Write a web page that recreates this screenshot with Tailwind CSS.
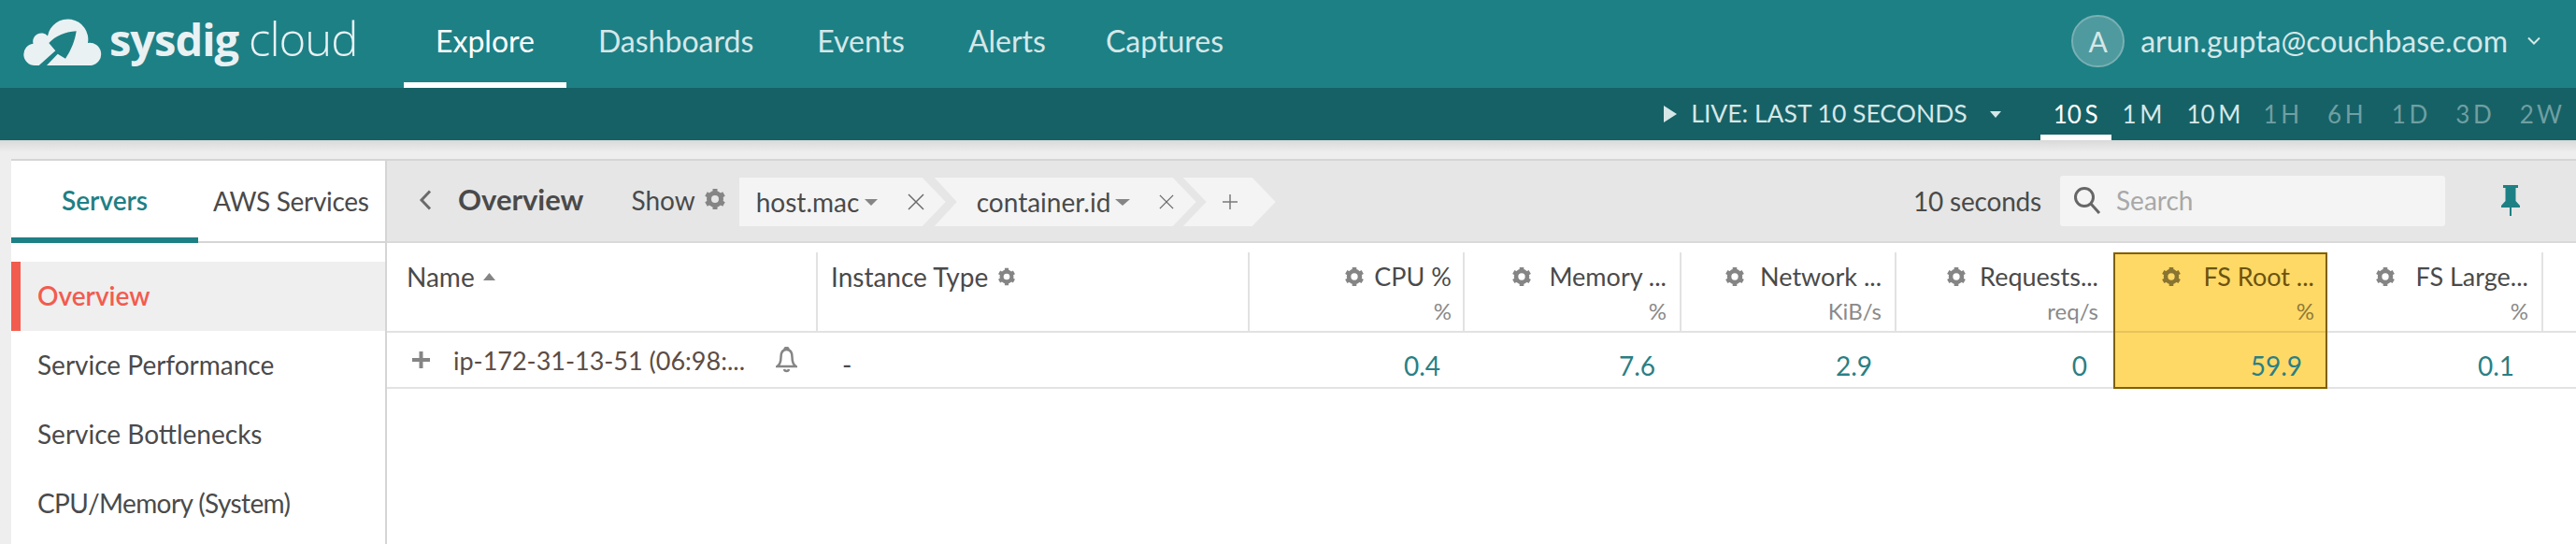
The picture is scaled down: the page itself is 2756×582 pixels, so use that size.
<!DOCTYPE html>
<html>
  <head>
    <meta charset="UTF-8" />
    <script src="https://cdn.jsdelivr.net/npm/@tailwindcss/browser@4"></script>
    <title>sysdig cloud</title>
  </head>
  <body class="h-[582px] overflow-hidden bg-[#eeeeee] font-['Lato',sans-serif] text-[#4a4a4a]">
    <svg class="hidden">
      <symbol id="gear" viewBox="0 0 24 24">
        <circle cx="12" cy="12" r="6.5" fill="none" stroke="currentColor" stroke-width="5" />
        <path d="M12 1v6M12 17v6M2.500 6.500l5.200 3M16.300 14.500l5.200 3M2.500 17.500l5.200-3M16.300 9.500l5.200-3" stroke="currentColor" stroke-width="5" />
      </symbol>
    </svg>

    <!-- top nav -->
    <header class="flex h-[94px] items-stretch bg-[#1d8085]">
      <div class="flex w-[432px] items-start pl-[25px] pt-[18px]">
        <svg class="h-[52px] w-[85px]" viewBox="5 8 85 52" fill="#e9f1f3">
          <path d="M17 60a11.700 11.700 0 0 1-1.500-23.300a9 9 0 0 1 15.500-8.200a21.700 21.700 0 0 1 43 7.500a12 12 0 0 1 4 24z" />
          <path fill="#1d8085" d="M61.700 23.300C49 24 39 29 32.300 36L39.300 44.300L21.700 60H30L41.700 47.700L50 52.700C56 44 60 34 61.700 23.300z" />
        </svg>
        <div class="ml-[7px] mt-[-9px] flex items-baseline font-['Open_Sans',sans-serif] text-[#e9f1f3]">
          <span class="text-[47px] leading-[64px] font-bold tracking-[-1px]">sysdig</span>
          <span class="ml-[11px] text-[49px] leading-[64px] font-light tracking-[-1px]">cloud</span>
        </div>
      </div>
      <nav class="flex text-[32px] text-[#d6e7e8]">
        <a class="flex items-center border-b-[6px] border-white px-[34px] text-white">Explore</a>
        <a class="flex items-center border-b-[6px] border-transparent px-[34px]">Dashboards</a>
        <a class="flex items-center border-b-[6px] border-transparent px-[34px]">Events</a>
        <a class="flex items-center border-b-[6px] border-transparent px-[34px]">Alerts</a>
        <a class="flex items-center border-b-[6px] border-transparent pl-[30px] pr-[34px]">Captures</a>
      </nav>
      <div class="ml-auto flex items-center pb-[6px] pr-[37px] text-[32px] text-[#d6e7e8]">
        <span class="flex h-[56px] w-[57px] items-center justify-center rounded-full border-2 border-[#79b0b3] bg-[#4f9a9e] text-[30px]">A</span>
        <span class="ml-[17px]">arun.gupta@couchbase.com</span>
        <svg class="ml-[20px] h-[10px] w-[16px]" viewBox="0 0 16 10" fill="none" stroke="#d6e7e8" stroke-width="2"><path d="M2 1.500l6 6 6-6" /></svg>
      </div>
    </header>

    <!-- time range bar -->
    <div class="flex h-[56px] items-stretch justify-end bg-[#166166] pr-[15px] text-[26px] text-[#d6e7e8] [word-spacing:-3px]">
      <div class="mr-[42px] flex items-center">
        <svg class="h-[18px] w-[14px]" viewBox="0 0 14 18" fill="#d6e7e8"><path d="M0 0l14 9L0 18z" /></svg>
        <span class="ml-[15px] text-[26.500px] [word-spacing:0]">LIVE: LAST 10 SECONDS</span>
        <svg class="ml-[24px] h-[7px] w-[12px]" viewBox="0 0 12 7" fill="#d6e7e8"><path d="M0 0h12L6 7z" /></svg>
      </div>
      <div class="flex items-center border-b-[6px] border-white px-[14px] pt-[6px] text-white">10 S</div>
      <div class="ml-[12px] flex items-center">1 M</div>
      <div class="ml-[26px] flex items-center">10 M</div>
      <div class="ml-[24px] flex items-center text-[#6f9fa2]">1 H</div>
      <div class="ml-[30px] flex items-center text-[#6f9fa2]">6 H</div>
      <div class="ml-[30px] flex items-center text-[#6f9fa2]">1 D</div>
      <div class="ml-[30px] flex items-center text-[#6f9fa2]">3 D</div>
      <div class="ml-[30px] flex items-center text-[#6f9fa2]">2 W</div>
    </div>

    <!-- main panel -->
    <main class="h-[432px] bg-gradient-to-b from-[#d9d9d9] from-0% to-[#eeeeee] to-[3%] pl-[12px] pt-[20px]">
      <div class="flex h-[412px] border-t-2 border-[#d5d5d5] bg-white">
        <aside class="w-[402px] shrink-0 border-r-2 border-[#d5d5d5]">
          <div class="flex h-[88px] border-b-2 border-[#d5d5d5] text-[28px]">
            <div class="flex w-[200px] -mb-[2px] items-center justify-center border-b-[6px] border-[#1d8085] pt-[2px] font-semibold text-[#1d8085]">Servers</div>
            <div class="flex flex-1 items-center pl-[16px] tracking-[-0.3px]">AWS Services</div>
          </div>
          <ul class="pt-[20px] text-[28px]">
            <li class="flex h-[74px] items-center border-l-[10px] border-[#f25c4f] bg-[#efefef] pb-[3px] pl-[18px] font-semibold text-[#f25c4f]">Overview</li>
            <li class="flex h-[74px] items-center pb-[3px] pl-[28px]">Service Performance</li>
            <li class="flex h-[74px] items-center pb-[3px] pl-[28px]">Service Bottlenecks</li>
            <li class="flex h-[74px] items-center pb-[3px] pl-[28px] tracking-[-0.6px]">CPU/Memory (System)</li>
          </ul>
        </aside>

        <section class="min-w-0 flex-1">
          <!-- toolbar -->
          <div class="flex h-[88px] items-start border-b-2 border-[#d9d9d9] bg-[#e6e6e6] pt-[18px]">
            <svg class="ml-[34px] mt-[13px] h-[22px] w-[14px]" viewBox="0 0 14 22" fill="none" stroke="#6b6b6b" stroke-width="3"><path d="M12 1.500L3 11l9 9.500" /></svg>
            <span class="ml-[28px] text-[31px] font-bold">Overview</span>
            <span class="ml-[51px] mt-[3px] text-[28px]">Show</span>
            <svg class="ml-[9px] mt-[11px] h-[24px] w-[24px] text-[#858585]"><use href="#gear" /></svg>
            <!-- breadcrumb chips -->
            <div class="relative ml-[14px] flex h-[52px] w-[221px] items-center bg-[#f4f4f4] pl-[18px] text-[28px] [clip-path:polygon(0_0,196px_0,221px_50%,196px_100%,0_100%)]">
              host.mac
              <svg class="ml-[6px] h-[7px] w-[14px]" viewBox="0 0 14 7" fill="#858585"><path d="M0 0h14L7 7z" /></svg>
              <svg class="ml-[32px] h-[18px] w-[18px]" viewBox="0 0 18 18" stroke="#6b6b6b" stroke-width="1.500"><path d="M1 1l16 16M17 1L1 17" /></svg>
            </div>
            <div class="relative -ml-[12px] flex h-[52px] w-[280px] items-center bg-[#f4f4f4] pl-[45px] text-[28px] [clip-path:polygon(0_0,255px_0,280px_50%,255px_100%,0_100%,24px_50%)]">
              container.id
              <svg class="ml-[5px] h-[7px] w-[16px]" viewBox="0 0 16 7" fill="#858585"><path d="M0 0h16L8 7z" /></svg>
              <svg class="ml-[31px] h-[18px] w-[16px]" viewBox="0 0 18 18" stroke="#6b6b6b" stroke-width="1.500"><path d="M1 1l16 16M17 1L1 17" /></svg>
            </div>
            <div class="relative -ml-[14px] flex h-[52px] w-[99px] items-center bg-[#f4f4f4] pl-[42px] text-[28px] [clip-path:polygon(0_0,74px_0,99px_50%,74px_100%,0_100%,25px_50%)]">
              <svg class="h-[16px] w-[16px]" viewBox="0 0 16 16" stroke="#7a7a7a" stroke-width="1.500"><path d="M8 0v16M0 8h16" /></svg>
            </div>
            <span class="ml-auto mt-[4px] text-[28px] tracking-[-0.2px]">10 seconds</span>
            <div class="-mt-[2px] ml-[20px] flex h-[54px] w-[412px] items-center rounded-[3px] bg-[#f4f4f4] pl-[14px] pb-[2px] text-[28px] text-[#a8a8a8]">
              <svg class="h-[30px] w-[30px]" viewBox="0 0 30 30" fill="none" stroke="#666666" stroke-width="3"><circle cx="12" cy="12" r="9.500" /><path d="M19 19l9 10" /></svg>
              <span class="ml-[16px]">Search</span>
            </div>
            <svg class="ml-[60px] mr-[60px] mt-[8px] h-[33px] w-[20px]" viewBox="0 0 20 33" fill="#1d8085"><path d="M2 0h16v3h-2.500v14L20 22v2H11v9H9v-9H0v-2l4.500-5V3H2z" /></svg>
          </div>

          <!-- table header -->
          <div class="flex h-[96px] items-stretch border-b-2 border-[#e2e2e2] pt-[10px] text-[27px]">
            <div class="flex w-[459px] items-start pl-[21px] pt-[5px] text-[28px] leading-[42px]">Name
              <svg class="ml-[9px] mt-[17px] h-[8px] w-[13px]" viewBox="0 0 13 8" fill="#858585"><path d="M0 8h13L6.500 0z" /></svg>
            </div>
            <div class="flex w-[462px] items-start border-l-2 border-[#e2e2e2] pl-[14px] pt-[5px] text-[28px] leading-[42px]">Instance Type
              <svg class="ml-[10px] mt-[11px] h-[20px] w-[20px] text-[#858585]"><use href="#gear" /></svg>
            </div>
            <div class="w-[230px] border-l-2 border-[#e2e2e2] pr-[12px] pt-[6px] text-right">
              <div class="flex items-center justify-end leading-[40px]"><svg class="mr-[10px] h-[22px] w-[22px] text-[#858585]"><use href="#gear" /></svg>CPU %</div>
              <div class="-mt-[1px] text-[24px] leading-[36px] text-[#8a8a8a]">%</div>
            </div>
            <div class="w-[232px] border-l-2 border-[#e2e2e2] pr-[14px] pt-[6px] text-right">
              <div class="flex items-center justify-end leading-[40px]"><svg class="mr-[18px] h-[22px] w-[22px] text-[#858585]"><use href="#gear" /></svg>Memory ...</div>
              <div class="-mt-[1px] text-[24px] leading-[36px] text-[#8a8a8a]">%</div>
            </div>
            <div class="w-[230px] border-l-2 border-[#e2e2e2] pr-[14px] pt-[6px] text-right">
              <div class="flex items-center justify-end leading-[40px]"><svg class="mr-[16px] h-[22px] w-[22px] text-[#858585]"><use href="#gear" /></svg>Network ...</div>
              <div class="-mt-[1px] text-[24px] leading-[36px] text-[#8a8a8a]">KiB/s</div>
            </div>
            <div class="w-[234px] border-l-2 border-[#e2e2e2] pr-[16px] pt-[6px] text-right">
              <div class="flex items-center justify-end leading-[40px]"><svg class="mr-[14px] h-[22px] w-[22px] text-[#858585]"><use href="#gear" /></svg>Requests...</div>
              <div class="-mt-[1px] text-[24px] leading-[36px] text-[#8a8a8a]">req/s</div>
            </div>
            <div class="relative z-10 -mb-[2px] w-[229px] border-x-2 border-t-2 border-[#806000] bg-[#ffd966] pr-[12px] pt-[4px] text-right text-[#6b5310]">
              <div class="flex items-center justify-end leading-[40px]"><svg class="mr-[23px] h-[22px] w-[22px] text-[#8a7431]"><use href="#gear" /></svg>FS Root ...</div>
              <div class="-mt-[1px] text-[24px] leading-[36px] text-[#8f7a3a]">%</div>
              <div class="absolute inset-x-0 bottom-0 h-[2px] bg-[#e6c45c]"></div>
            </div>
            <div class="w-[231px] border-r-2 border-[#e2e2e2] pr-[14px] pt-[6px] text-right">
              <div class="flex items-center justify-end leading-[40px]"><svg class="mr-[22px] h-[22px] w-[22px] text-[#858585]"><use href="#gear" /></svg>FS Large...</div>
              <div class="-mt-[1px] text-[24px] leading-[36px] text-[#8a8a8a]">%</div>
            </div>
          </div>

          <!-- table row -->
          <div class="flex h-[60px] items-stretch border-b-2 border-[#e2e2e2] text-[28px] text-[#2a7f85]">
            <div class="flex w-[459px] items-center pl-[27px] text-[#5c4c44]">
              <svg class="h-[18px] w-[19px]" viewBox="0 0 19 18" stroke="#858585" stroke-width="4"><path d="M9.500 0v18M0 9h19" /></svg>
              <span class="ml-[25px] pt-[2px] text-[27px]">ip-172-31-13-51 (06:98:...</span>
              <svg class="ml-[33px] h-[28px] w-[23px]" viewBox="0 0 23 28" fill="none" stroke="#858585" stroke-width="2.500"><path d="M11.500 3c-4.500 0-6 3-6 8 0 5-1 8-4 10h20c-3-2-4-5-4-10 0-5-1.500-8-6-8zM9.500 3a2 2 0 0 1 4 0M9 24c.5 2.500 4.500 2.500 5 0" /></svg>
            </div>
            <div class="flex w-[462px] items-center pl-[28px] pt-[10px] text-[#4a4a4a]">-</div>
            <div class="flex w-[230px] items-center justify-end pr-[24px] pt-[12px]">0.4</div>
            <div class="flex w-[232px] items-center justify-end pr-[26px] pt-[12px]">7.6</div>
            <div class="flex w-[230px] items-center justify-end pr-[24px] pt-[12px]">2.9</div>
            <div class="flex w-[234px] items-center justify-end pr-[28px] pt-[12px]">0</div>
            <div class="relative z-10 -mb-[2px] flex w-[229px] items-center justify-end border-x-2 border-b-2 border-[#806000] bg-[#ffd966] pr-[25px] pt-[12px]">59.9</div>
            <div class="flex w-[231px] items-center justify-end pr-[31px] pt-[12px]">0.1</div>
          </div>
        </section>
      </div>
    </main>
  </body>
</html>
